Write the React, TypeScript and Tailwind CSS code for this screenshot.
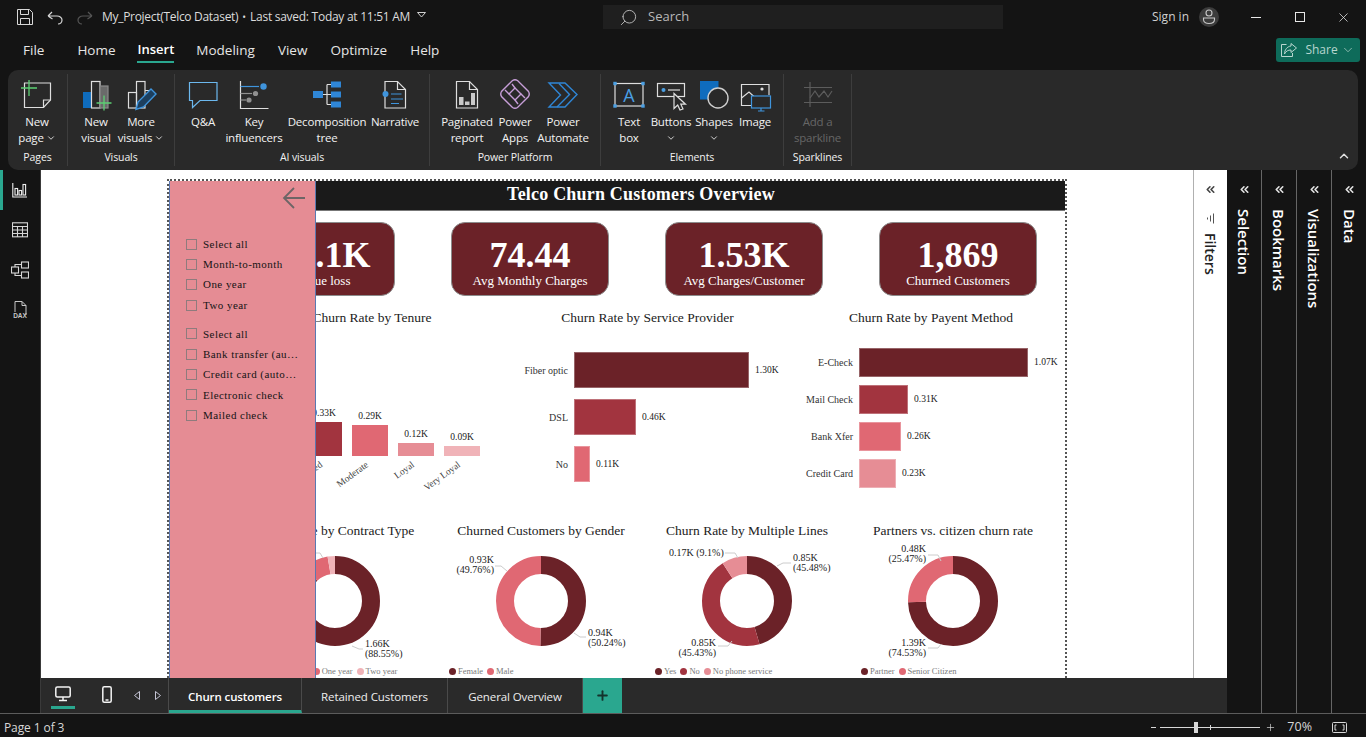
import { ChevronDown, ChevronUp, ChevronsLeft, Plus, Search, X } from "lucide-react";
import type { ReactNode } from "react";

const DARK = "#6b2228";
const MID = "#a2343f";
const ROSE = "#e06873";
const PINK = "#e68d95";
const LIGHT = "#f0b3b8";

const Ico = ({ children }: { children: ReactNode }) => (
  <svg width="36" height="34" viewBox="0 0 36 34" fill="none" stroke="#dedede" strokeWidth="1.2">
    {children}
  </svg>
);

const GreenPlus = ({ x, y, r }: { x: number; y: number; r: number }) => (
  <path d={`M${x - r} ${y}H${x + r}M${x} ${y - r}V${y + r}`} stroke="#5ccf73" strokeWidth="1.3" />
);

const NewPageIcon = () => (
  <Ico>
    <path d="M5.5 5H31.5V22L24.5 29.5H5.5Z" />
    <path d="M24.5 29.5V22H31.5" />
    <GreenPlus x={10} y={10} r={8} />
  </Ico>
);
const NewVisualIcon = () => (
  <Ico>
    <rect x="5" y="14" width="8" height="16" fill="#0f6cbd" stroke="none" />
    <rect x="13.5" y="3.5" width="8.5" height="26.5" />
    <rect x="22" y="8" width="8" height="22" fill="#6a6a6a" stroke="#8a8a8a" />
    <GreenPlus x={26} y={25} r={7.5} />
  </Ico>
);
const MoreVisualsIcon = () => (
  <Ico>
    <rect x="5.5" y="14.5" width="8" height="15.5" />
    <rect x="13.5" y="3.5" width="8.5" height="26.5" />
    <path d="M22 12.5H29V18" />
    <path d="M13 31.5L15 24L28 11L33 16L20.5 29Z" fill="#1d3f5e" stroke="#3f94dc" strokeWidth="1.4" />
  </Ico>
);
const QnaIcon = () => (
  <Ico>
    <path d="M4.5 4.5H32V22.5H15L7.5 29.5V22.5H4.5Z" stroke="#6cb8ee" />
  </Ico>
);
const KeyInfluencersIcon = () => (
  <Ico>
    <path d="M4.5 3V30.5H32.5" />
    <path d="M4.5 8.5H23" stroke="#3f94dc" />
    <circle cx="27.5" cy="8.5" r="3.2" fill="#3f94dc" stroke="none" />
    <path d="M4.5 15.5H16" stroke="#909090" />
    <circle cx="19.5" cy="15.5" r="2.6" fill="#909090" stroke="none" />
    <path d="M4.5 22H10" stroke="#909090" />
    <circle cx="13" cy="22" r="2.6" fill="#909090" stroke="none" />
  </Ico>
);
const DecompositionIcon = () => (
  <Ico>
    <path d="M14 16.5H22M18 6.5V26.5M18 6.5H22M18 26.5H22" />
    <rect x="4" y="13" width="10" height="7" fill="#2f86d6" stroke="none" />
    <rect x="22" y="3.5" width="10" height="6" fill="#2f86d6" stroke="none" />
    <rect x="22" y="13.5" width="10" height="6" fill="#2f86d6" stroke="none" />
    <rect x="22" y="23.5" width="10" height="6" fill="#2f86d6" stroke="none" />
  </Ico>
);
const NarrativeIcon = () => (
  <Ico>
    <path d="M8 3.5H20.5L28.5 11.5V30H8Z" />
    <path d="M20.5 3.5V11.5H28.5" />
    <circle cx="8.5" cy="16" r="3" fill="#3f94dc" stroke="none" />
    <path d="M14 16H24.5M14 21H26M14 25.5H22" stroke="#3f94dc" />
  </Ico>
);
const PaginatedIcon = () => (
  <Ico>
    <path d="M7.5 3.5H20.5L28.5 11.5V30H7.5Z" />
    <path d="M20.5 3.5V11.5H28.5" />
    <rect x="10" y="19" width="4.5" height="8" fill="#c9c9c9" stroke="none" />
    <rect x="16" y="23.5" width="4.5" height="3.5" fill="#c9c9c9" stroke="none" />
    <rect x="22" y="15" width="4" height="12" fill="#c9c9c9" stroke="none" />
  </Ico>
);
const PowerAppsIcon = () => (
  <Ico>
    <g stroke="#c79ed8" strokeWidth="1.4">
      <path d="M15.5 2.5Q18 1 20.5 2.5L31.5 13.5Q33 16 31.5 18.5L20.5 29.5Q18 31 15.5 29.5L4.5 18.5Q3 16 4.5 13.5Z" />
      <path d="M18 10L24 16L18 22L12 16Z" />
      <path d="M12 16L8 12M24 16L28 20M18 22L21 26M18 10L15 6" />
    </g>
  </Ico>
);
const PowerAutomateIcon = () => (
  <Ico>
    <g stroke="#2f86d6" strokeWidth="1.4">
      <path d="M4 5H20L32 16.5L20 29H4L15.5 17Z" />
      <path d="M12 29L24.5 16.5L14 5.5" />
    </g>
  </Ico>
);
const TextBoxIcon = () => (
  <Ico>
    <rect x="4" y="5.5" width="28" height="22.5" />
    <text x="18" y="24" textAnchor="middle" fontSize="18" fill="#4a9fe3" stroke="none">A</text>
    {[[4, 5.5], [32, 5.5], [4, 28], [32, 28]].map(([x, y]) => (
      <rect key={x + "-" + y} x={x - 1.7} y={y - 1.7} width="3.4" height="3.4" fill="#4a9fe3" stroke="none" />
    ))}
  </Ico>
);
const ButtonsIcon = () => (
  <Ico>
    <rect x="4.5" y="5.5" width="27" height="13" />
    <circle cx="10.5" cy="12" r="2" fill="#4a9fe3" stroke="none" />
    <path d="M15 12H27" />
    <path d="M21 15.5V30.5L24.7 27L27 32L30 31L27.8 26.2H32.5Z" fill="#292929" />
  </Ico>
);
const ShapesIcon = () => (
  <Ico>
    <rect x="4" y="3" width="18.5" height="18.5" fill="#0f6cbd" stroke="none" />
    <circle cx="22" cy="20" r="10" fill="#292929" stroke="#cfcfcf" strokeWidth="1.4" />
  </Ico>
);
const ImageIcon = () => (
  <Ico>
    <path d="M14 27.5H4.5V6.5H32V17" />
    <path d="M4.5 20L12 14L18 19.5" />
    <circle cx="25" cy="11" r="1.6" fill="#dedede" stroke="none" />
    <rect x="14.5" y="18" width="19" height="12" fill="#292929" stroke="#3f94dc" />
    <path d="M24 30V33M21 33H27.5" stroke="#3f94dc" />
  </Ico>
);
const SparklineIcon = () => (
  <Ico>
    <g stroke="#5c5c5c">
      <path d="M4 9.5H32M4 24.5H32M10 4V29" />
      <path d="M10 20L15 13L19 19L24 13L28 19L32 13" />
    </g>
  </Ico>
);

const RibbonItem = ({ w, icon, lines, chevron, dim }: { w: string; icon: ReactNode; lines: string[]; chevron?: boolean; dim?: boolean }) => (
  <div className={`flex flex-col items-center pt-[4px] ${w}`}>
    <div className="h-[34px] flex items-center justify-center">{icon}</div>
    <div className={`mt-[2px] flex flex-col items-center text-[11.5px] tracking-[-0.2px] leading-[16px] whitespace-nowrap ${dim ? "text-[#666666]" : "text-[#f2f2f2]"}`}>
      {lines.map((l, i) => (
        <span key={l} className="flex items-center gap-[2px]">
          {l}
          {chevron && lines.length > 1 && i === 1 && <ChevronDown size={10} />}
        </span>
      ))}
      {chevron && lines.length === 1 && <ChevronDown size={10} className="h-[16px]" />}
    </div>
  </div>
);

const RibbonGroup = ({ label, w, children }: { label: string; w: string; children: ReactNode }) => (
  <div className={`flex flex-col items-center shrink-0 border-r border-[#3d3d3d] my-[4px] ${w}`}>
    <div className="flex flex-1 self-start">{children}</div>
    <div className="h-[18px] pt-[2px] flex items-center text-[10.5px] tracking-[-0.1px] text-[#f2f2f2]">{label}</div>
  </div>
);

const Ribbon = () => (
  <div className="mx-[8px] h-[100px] rounded-[10px] bg-[#292929] flex relative">
    <RibbonGroup label="Pages" w="w-[60px]">
      <RibbonItem w="w-[58px]" icon={<NewPageIcon />} lines={["New", "page"]} chevron />
    </RibbonGroup>
    <RibbonGroup label="Visuals" w="w-[107px]">
      <RibbonItem w="w-[56px]" icon={<NewVisualIcon />} lines={["New", "visual"]} />
      <RibbonItem w="w-[34px]" icon={<MoreVisualsIcon />} lines={["More", "visuals"]} chevron />
    </RibbonGroup>
    <RibbonGroup label="AI visuals" w="w-[255px]">
      <RibbonItem w="w-[56px]" icon={<QnaIcon />} lines={["Q&A"]} />
      <RibbonItem w="w-[46px]" icon={<KeyInfluencersIcon />} lines={["Key", "influencers"]} />
      <RibbonItem w="w-[100px]" icon={<DecompositionIcon />} lines={["Decomposition", "tree"]} />
      <RibbonItem w="w-[36px]" icon={<NarrativeIcon />} lines={["Narrative"]} />
    </RibbonGroup>
    <RibbonGroup label="Power Platform" w="w-[171px]">
      <RibbonItem w="w-[74px]" icon={<PaginatedIcon />} lines={["Paginated", "report"]} />
      <RibbonItem w="w-[22px]" icon={<PowerAppsIcon />} lines={["Power", "Apps"]} />
      <RibbonItem w="w-[74px]" icon={<PowerAutomateIcon />} lines={["Power", "Automate"]} />
    </RibbonGroup>
    <RibbonGroup label="Elements" w="w-[183px]">
      <RibbonItem w="w-[56px]" icon={<TextBoxIcon />} lines={["Text", "box"]} />
      <RibbonItem w="w-[28px]" icon={<ButtonsIcon />} lines={["Buttons"]} chevron />
      <RibbonItem w="w-[58px]" icon={<ShapesIcon />} lines={["Shapes"]} chevron />
      <RibbonItem w="w-[24px]" icon={<ImageIcon />} lines={["Image"]} />
    </RibbonGroup>
    <RibbonGroup label="Sparklines" w="w-[68px]">
      <RibbonItem w="w-[67px]" icon={<SparklineIcon />} lines={["Add a", "sparkline"]} dim />
    </RibbonGroup>
    <ChevronUp size={14} strokeWidth={2.5} className="absolute right-[7px] bottom-[7px] text-[#e0e0e0]" />
  </div>
);

const TitleBar = () => (
  <div className="h-[34px] flex items-center text-[#dcdcdc] text-[12px]">
    <svg width="16" height="16" viewBox="0 0 16 16" fill="none" stroke="#d8d8d8" className="ml-[17px]">
      <path d="M.5.5H12.5L15.5 3.5V15.5H.5Z" />
      <path d="M3.5.5V5.5H11.5V.5M3.5 15.5V9.5H12.5V15.5" />
    </svg>
    <svg width="16" height="16" viewBox="0 0 16 16" fill="none" stroke="#d8d8d8" strokeWidth="1.2" className="ml-[14px]">
      <path d="M1 7L5 3M1 7L5.5 10M1 7H10C13 7 15 9 15 11C15 13 13.5 15 11 15" />
    </svg>
    <svg width="16" height="16" viewBox="0 0 16 16" fill="none" stroke="#555555" strokeWidth="1.2" className="ml-[14px]">
      <path d="M15 7L11 3M15 7L10.5 10M15 7H6C3 7 1 9 1 11C1 13 2.5 15 5 15" />
    </svg>
    <span className="ml-[9px] whitespace-nowrap tracking-[-0.3px]">My_Project(Telco Dataset)</span>
    <span className="ml-[4px] text-[10px]">•</span>
    <span className="ml-[4px] whitespace-nowrap tracking-[-0.27px]">Last saved: Today at 11:51 AM</span>
    <svg width="9" height="6" viewBox="0 0 9 6" fill="none" stroke="#d0d0d0" className="ml-[7px] mb-[4px]">
      <path d="M.5.5H8.5L4.5 5Z" />
    </svg>
    <div className="absolute left-[603px] top-[5px] w-[400px] h-[24px] bg-[#1f1f1f] flex items-center pl-[16px] gap-[10px] text-[#b8b8b8] text-[13px]">
      <Search size={19} strokeWidth={1.2} className="-scale-x-100" />
      Search
    </div>
    <div className="ml-auto flex items-center">
      <span className="text-[#d0d0d0]">Sign in</span>
      <div className="ml-[10px] w-[20px] h-[20px] rounded-full bg-[#3c3c3c] flex items-center justify-center">
        <svg width="14" height="16" viewBox="0 0 14 16" fill="none" stroke="#c8c8c8" strokeWidth="1.1">
          <circle cx="7" cy="4" r="3" />
          <path d="M1.5 9H12.5V10.5C12.5 13 10 14.5 7 14.5C4 14.5 1.5 13 1.5 10.5Z" />
        </svg>
      </div>
      <span className="ml-[32px] w-[10px] h-[1px] bg-[#e8e8e8]" />
      <span className="ml-[34px] w-[10px] h-[10px] border border-[#e8e8e8]" />
      <X size={15} strokeWidth={1.2} className="ml-[31px] mr-[15px] text-[#e8e8e8]" />
    </div>
  </div>
);

const MenuBar = () => (
  <div className="h-[36px] pb-[4px] flex items-center text-[13.5px] text-[#e6e6e6] relative">
    <span className="ml-[23px]">File</span>
    <span className="ml-[33px]">Home</span>
    <span className="ml-[22px] relative text-[13px] font-semibold text-white">
      Insert
      <span className="absolute -left-[1px] right-0 -bottom-[3px] h-[2px] bg-[#2aa78f]" />
    </span>
    <span className="ml-[22px]">Modeling</span>
    <span className="ml-[23px]">View</span>
    <span className="ml-[23px]">Optimize</span>
    <span className="ml-[23px]">Help</span>
    <button className="ml-auto mr-[6px] w-[84px] h-[24px] rounded-[3px] bg-[#0e6b5a] flex items-center justify-center gap-[8px] text-[12px] text-[#b9d6cf]">
      <svg width="16" height="14" viewBox="0 0 16 14" fill="none" stroke="#b9d6cf">
        <path d="M5.5 1.5H.5V13.5H11.5V10" />
        <path d="M10 .5L15.5 5L10 9.5V7C7 7 5 8 3.5 11C3.5 7 6 3.5 10 3Z" />
      </svg>
      <span className="flex items-center gap-[3px]">Share<ChevronDown size={14} strokeWidth={1.2} /></span>
    </button>
  </div>
);

const Rail = () => (
  <div className="w-[41px] shrink-0 border-r border-[#3a3a3a] flex flex-col relative">
    <div className="absolute left-0 top-0 w-[3px] h-[40px] bg-[#2aa78f]" />
    <div className="h-[40px] flex items-center justify-center">
      <svg width="16" height="16" viewBox="0 0 16 16" fill="none" stroke="#eeeeee" strokeWidth="1.1">
        <path d="M.8 1V15H15" />
        <rect x="3" y="6.5" width="2.6" height="6.5" />
        <rect x="7" y="8.5" width="2.6" height="4.5" />
        <rect x="11" y="2.5" width="2.6" height="10.5" />
      </svg>
    </div>
    <div className="h-[40px] flex items-center justify-center">
      <svg width="16" height="16" viewBox="0 0 16 16" fill="none" stroke="#d6d6d6" strokeWidth="1.1">
        <rect x=".5" y=".8" width="15" height="14" />
        <path d="M.5 4.5H15.5M.5 8H15.5M.5 11.5H15.5M5.5 4.5V15M10.5 4.5V15" />
      </svg>
    </div>
    <div className="h-[40px] flex items-center justify-center">
      <svg width="18" height="18" viewBox="0 0 18 18" fill="none" stroke="#d6d6d6" strokeWidth="1.1">
        <rect x=".5" y="6" width="7" height="6" />
        <rect x="10.5" y="1" width="7" height="6" />
        <rect x="10.5" y="11" width="7" height="6" />
        <path d="M4 6V3.5H10.5M4 12V14.5H10.5" />
      </svg>
    </div>
    <div className="h-[40px] flex items-center justify-center">
      <svg width="18" height="18" viewBox="0 0 18 18" fill="none" stroke="#c8c8c8" strokeWidth="1">
        <path d="M4 11V.5H11L15 4.5V14" />
        <path d="M11 .5V4.5H15" />
        <text x="9" y="17" textAnchor="middle" fontSize="6.5" fill="#c8c8c8" stroke="none" className="font-['Liberation_Sans',sans-serif] font-bold">DAX</text>
      </svg>
    </div>
  </div>
);

const KPI = ({ value, label }: { value: string; label: string }) => (
  <div className="w-[158px] h-[74px] rounded-[14px] bg-[#6b2228] border border-[#8c8c8c] flex flex-col items-center text-white">
    <span className="mt-[12px] text-[36px] leading-[40px] font-bold">{value}</span>
    <span className="-mt-[2px] text-[13px] leading-[16px]">{label}</span>
  </div>
);

const ChartTitle = ({ children, className = "" }: { children: ReactNode; className?: string }) => (
  <div className={`h-[20px] flex items-center justify-center text-[13.5px] text-[#222222] whitespace-nowrap ${className}`}>{children}</div>
);

const TenureChart = () => {
  const bars = [
    { x: 137, top: 94, color: MID, value: "0.33K", label: "Established" },
    { x: 183, top: 97, color: ROSE, value: "0.29K", label: "Moderate" },
    { x: 229, top: 115, color: PINK, value: "0.12K", label: "Loyal" },
    { x: 275, top: 118, color: LIGHT, value: "0.09K", label: "Very Loyal" },
  ];
  return (
    <svg width="338" height="188" viewBox="0 0 338 188" className="block">
      {bars.map((b) => (
        <g key={b.label}>
          <rect x={b.x} y={b.top} width="36" height={128 - b.top} fill={b.color} />
          <text x={b.x + 18} y={b.top - 6} textAnchor="middle" fontSize="9.5" fill="#222222">{b.value}</text>
          <text
            x={b.x + 17}
            y={138}
            textAnchor="end"
            fontSize="9.5"
            fill="#444444"
            transform={`rotate(-36 ${b.x + 17} 138)`}
          >
            {b.label}
          </text>
        </g>
      ))}
    </svg>
  );
};

const HBars = ({ rows, labelW, h, gap, top }: { rows: { label: string; w: number; color: string; value: string }[]; labelW: string; h: string; gap: string; top: string }) => (
  <div className={`flex flex-col ${gap} ${top}`}>
    {rows.map((r) => (
      <div key={r.label} className={`flex items-center ${h}`}>
        <span className={`${labelW} text-right text-[10px] text-[#333333] whitespace-nowrap`}>{r.label}</span>
        <div className="ml-[6px] h-full border border-white/30" style={{ width: r.w, backgroundColor: r.color }} />
        <span className="ml-[6px] text-[9.5px] text-[#222222]">{r.value}</span>
      </div>
    ))}
  </div>
);

type Seg = { pct: number; color: string };

const Donut = ({ segs }: { segs: Seg[] }) => {
  let acc = 0;
  return (
    <g transform="rotate(-90 103 60)">
      {segs.map((s) => {
        const off = -acc;
        acc += s.pct;
        return (
          <circle
            key={s.color}
            cx="103"
            cy="60"
            r="36"
            fill="none"
            stroke={s.color}
            strokeWidth="18"
            pathLength={100}
            strokeDasharray={`${s.pct} ${100 - s.pct}`}
            strokeDashoffset={off}
          />
        );
      })}
    </g>
  );
};

const DataLabel = ({ x, y, lines, anchor = "start" }: { x: number; y: number; lines: string[]; anchor?: "start" | "end" | "middle" }) => (
  <text fontSize="10" fill="#222222" stroke="none" textAnchor={anchor}>
    {lines.map((l, i) => (
      <tspan key={l} x={x} y={y + i * 9.5}>{l}</tspan>
    ))}
  </text>
);

const DonutCol = ({ title, segs, legend, children }: { title: string; segs: Seg[]; legend: { label: string; color: string }[]; children: ReactNode }) => (
  <div className="w-[206px] shrink-0 flex flex-col">
    <ChartTitle className="h-[18px]">{title}</ChartTitle>
    <svg width="206" height="122" viewBox="0 0 206 122" className="block overflow-visible">
      <Donut segs={segs} />
      <g fill="none" stroke="#cccccc">{children}</g>
    </svg>
    <div className="mt-[2px] pl-[11px] flex items-center gap-[4px] text-[8.5px] leading-[12px] text-[#7a7a7a] whitespace-nowrap">
      {legend.map((l) => (
        <span key={l.label} className="flex items-center gap-[2px]">
          <span className="w-[7px] h-[7px] rounded-full" style={{ backgroundColor: l.color }} />
          {l.label}
        </span>
      ))}
    </div>
  </div>
);

const SlicerItem = ({ label }: { label: string }) => (
  <div className="h-[20.3px] flex items-center gap-[6px] text-[11px] tracking-[0.45px] text-[#141414] whitespace-nowrap">
    <span className="w-[11px] h-[11px] border border-[#8f7b7d] shrink-0" />
    {label}
  </div>
);

const Slicer = () => (
  <div className="absolute top-0 left-0 bottom-0 w-[147px] bg-[#e58c94] border-x border-[#5b78b0] z-10 flex flex-col pl-[16px]">
    <div className="flex justify-end pr-[9px] pt-[6px]">
      <svg width="24" height="22" viewBox="0 0 24 22" fill="none" stroke="#6d6566" strokeWidth="1.8">
        <path d="M23 11H2M12 1L2 11L12 21" />
      </svg>
    </div>
    <div className="mt-[25px]">
      {["Select all", "Month-to-month", "One year", "Two year"].map((l) => (
        <SlicerItem key={l} label={l} />
      ))}
    </div>
    <div className="mt-[8.6px]">
      {["Select all", "Bank transfer (au…", "Credit card (auto…", "Electronic check", "Mailed check"].map((l) => (
        <SlicerItem key={l} label={l} />
      ))}
    </div>
  </div>
);

const ReportPage = () => (
  <div className="mt-[9px] ml-[126px] w-[900px] h-[499px] border-x-2 border-t-2 border-dotted border-[#555555] relative overflow-hidden font-['Liberation_Serif',serif]">
    <Slicer />
    <div className="h-[30px] bg-[#1a1a1a] border-b border-[#777777] pl-[48px] pb-[3px] flex items-center justify-center text-[18px] font-bold text-white tracking-[0.2px]">
      Telco Churn Customers Overview
    </div>
    <div className="mt-[11px] pl-[68px] flex gap-[56px]">
      <KPI value="139.1K" label="Revenue loss" />
      <KPI value="74.44" label="Avg Monthly Charges" />
      <KPI value="1.53K" label="Avg Charges/Customer" />
      <KPI value="1,869" label="Churned Customers" />
    </div>
    <div className="mt-[12px] h-[213px] grid grid-cols-[338px_281px_277px]">
      <div>
        <ChartTitle className="pl-[68px]">Churn Rate by Tenure</ChartTitle>
        <TenureChart />
      </div>
      <div>
        <ChartTitle>Churn Rate by Service Provider</ChartTitle>
        <HBars
          labelW="w-[61px]"
          h="h-[36px]"
          gap="gap-[11px]"
          top="mt-[24px]"
          rows={[
            { label: "Fiber optic", w: 175, color: DARK, value: "1.30K" },
            { label: "DSL", w: 62, color: MID, value: "0.46K" },
            { label: "No", w: 16, color: ROSE, value: "0.11K" },
          ]}
        />
      </div>
      <div>
        <ChartTitle className="pl-[9px]">Churn Rate by Payent Method</ChartTitle>
        <HBars
          labelW="w-[65px]"
          h="h-[29px]"
          gap="gap-[8px]"
          top="mt-[20px]"
          rows={[
            { label: "E-Check", w: 169, color: DARK, value: "1.07K" },
            { label: "Mail Check", w: 49, color: MID, value: "0.31K" },
            { label: "Bank Xfer", w: 42, color: ROSE, value: "0.26K" },
            { label: "Credit Card", w: 37, color: PINK, value: "0.23K" },
          ]}
        />
      </div>
    </div>
    <div className="pl-[63px] flex">
      <DonutCol
        title="Churn Rate by Contract Type"
        segs={[{ pct: 88.55, color: DARK }, { pct: 8.8, color: ROSE }, { pct: 2.65, color: LIGHT }]}
        legend={[{ label: "Month-to-month", color: DARK }, { label: "One year", color: ROSE }, { label: "Two year", color: LIGHT }]}
      >
        <path d="M120 105L127 108H131" />
        <path d="M84 12H88L91 17" />
        <DataLabel x={133} y={106} lines={["1.66K", "(88.55%)"]} />
      </DonutCol>
      <DonutCol
        title="Churned Customers by Gender"
        segs={[{ pct: 50.24, color: DARK }, { pct: 49.76, color: ROSE }]}
        legend={[{ label: "Female", color: DARK }, { label: "Male", color: ROSE }]}
      >
        <path d="M136 92L142 96H148" />
        <path d="M57 25H63L69 30" />
        <DataLabel x={150} y={95} lines={["0.94K", "(50.24%)"]} />
        <DataLabel x={56} y={22} lines={["0.93K", "(49.76%)"]} anchor="end" />
      </DonutCol>
      <DonutCol
        title="Churn Rate by Multiple Lines"
        segs={[{ pct: 45.48, color: DARK }, { pct: 45.43, color: MID }, { pct: 9.09, color: PINK }]}
        legend={[{ label: "Yes", color: DARK }, { label: "No", color: MID }, { label: "No phone service", color: PINK }]}
      >
        <path d="M133 25L139 22H147" />
        <path d="M81 12H91L94 17" />
        <path d="M74 105H84L88 100" />
        <DataLabel x={25} y={15} lines={["0.17K (9.1%)"]} />
        <DataLabel x={149} y={20} lines={["0.85K", "(45.48%)"]} />
        <DataLabel x={72} y={105} lines={["0.85K", "(45.43%)"]} anchor="end" />
      </DonutCol>
      <DonutCol
        title="Partners vs. citizen churn rate"
        segs={[{ pct: 74.53, color: DARK }, { pct: 25.47, color: ROSE }]}
        legend={[{ label: "Partner", color: DARK }, { label: "Senior Citizen", color: ROSE }]}
      >
        <path d="M78 14H88L91 20" />
        <path d="M78 107H88L91 103" />
        <DataLabel x={76} y={11} lines={["0.48K", "(25.47%)"]} anchor="end" />
        <DataLabel x={76} y={105} lines={["1.39K", "(74.53%)"]} anchor="end" />
      </DonutCol>
    </div>
  </div>
);

const Tab = ({ label, active, w }: { label: string; active?: boolean; w: string }) => (
  <div className={`h-full flex items-center justify-center border-r border-[#4a4a4a] text-[11.5px] tracking-[-0.1px] whitespace-nowrap ${w} ${active ? "pt-[5px] font-semibold text-white border-b-[3px] border-b-[#2aa78f]" : "pt-[2px] text-[#eeeeee]"}`}>
    {label}
  </div>
);

const TabBar = () => (
  <div className="h-[35px] shrink-0 bg-[#2a2a2a] flex items-stretch text-white">
    <div className="w-[128px] shrink-0 border-r border-[#4a4a4a] flex items-center relative">
      <svg width="16" height="16" viewBox="0 0 16 16" fill="none" stroke="#f4f4f4" strokeWidth="1.5" className="ml-[14px] mb-[3px]">
        <rect x=".8" y="1" width="14.4" height="10" rx="1.5" />
        <path d="M8 11V14M4 14.5H12" />
      </svg>
      <span className="absolute left-[10px] top-[28px] w-[24px] h-[3px] bg-[#2aa78f]" />
      <svg width="10" height="17" viewBox="0 0 10 17" fill="none" stroke="#f4f4f4" strokeWidth="1.5" className="ml-[31px] mb-[3px]">
        <rect x=".8" y=".8" width="8.4" height="15.4" rx="1.5" />
        <path d="M3.5 14H6.5" />
      </svg>
      <svg width="6" height="9" viewBox="0 0 6 9" fill="none" stroke="#c4c4d4" className="ml-[22px]">
        <path d="M5.5.5V8.5L.5 4.5Z" />
      </svg>
      <svg width="6" height="9" viewBox="0 0 6 9" fill="none" stroke="#c4c4d4" className="ml-[15px]">
        <path d="M.5.5V8.5L5.5 4.5Z" />
      </svg>
    </div>
    <Tab label="Churn customers" active w="w-[133px]" />
    <Tab label="Retained Customers" w="w-[146px]" />
    <Tab label="General Overview" w="w-[135px]" />
    <div className="w-[39px] bg-[#2aa78f] flex items-center justify-center">
      <Plus size={15} strokeWidth={3} className="text-[#14332c]" />
    </div>
  </div>
);

const PaneTab = ({ label }: { label: string }) => (
  <div className="w-[35px] border-r border-[#666666] last:border-r-0 flex flex-col items-center pt-[13px] text-white">
    <ChevronsLeft size={13} strokeWidth={3} className="text-[#e4e4e4]" />
    <span className="mt-[13px] [writing-mode:vertical-rl] text-[15px] font-semibold">{label}</span>
  </div>
);

const StatusBar = () => (
  <div className="h-[24px] shrink-0 pt-[4px] border-t border-[#5c5c5c] flex items-center text-[12px] text-[#d8d8d8]">
    <span className="ml-[4px] tracking-[-0.1px]">Page 1 of 3</span>
    <div className="ml-auto flex items-center">
      <span className="w-[5px] h-[1.5px] bg-[#d8d8d8]" />
      <div className="ml-[4px] w-[100px] h-[1px] bg-[#d8d8d8] relative">
        <span className="absolute left-[34px] -top-[5px] w-[4px] h-[11px] bg-[#d8d8d8]" />
        <span className="absolute left-[50px] -top-[2px] w-[1px] h-[5px] bg-[#d8d8d8]" />
      </div>
      <Plus size={11} strokeWidth={1.5} className="ml-[5px]" />
      <span className="ml-[11px] text-[12.5px]">70%</span>
      <svg width="15" height="11" viewBox="0 0 15 11" fill="none" stroke="#d8d8d8" className="ml-[20px] mr-[19px]">
        <rect x=".5" y=".5" width="14" height="10" rx="1" />
        <path d="M4.5 3H3V8H4.5M10.5 3H12V8H10.5" />
      </svg>
    </div>
  </div>
);

export default function App() {
  return (
    <div className="w-[1366px] h-[737px] overflow-hidden bg-[#141414] flex flex-col relative font-['Open_Sans',sans-serif]">
      <TitleBar />
      <MenuBar />
      <Ribbon />
      <div className="flex-1 flex min-h-0">
        <Rail />
        <div className="w-[1186px] shrink-0 flex flex-col">
          <div className="flex-1 flex min-h-0 bg-white">
            <div className="w-[1152px] shrink-0 overflow-hidden">
              <ReportPage />
            </div>
            <div className="flex-1 border-l border-[#b0b0b0] flex flex-col items-center pt-[13px] text-[#222222]">
              <ChevronsLeft size={13} strokeWidth={3} className="text-[#444444]" />
              <svg width="10" height="11" viewBox="0 0 10 11" fill="none" stroke="#555555" className="mt-[17px]">
                <path d="M1.5 4.5V6.5M4.5 2.5V8.5M7.5 .5V10.5" />
              </svg>
              <span className="mt-[9px] [writing-mode:vertical-rl] text-[14px] font-semibold">Filters</span>
            </div>
          </div>
          <TabBar />
        </div>
        <div className="flex">
          <PaneTab label="Selection" />
          <PaneTab label="Bookmarks" />
          <PaneTab label="Visualizations" />
          <PaneTab label="Data" />
        </div>
      </div>
      <StatusBar />
    </div>
  );
}
